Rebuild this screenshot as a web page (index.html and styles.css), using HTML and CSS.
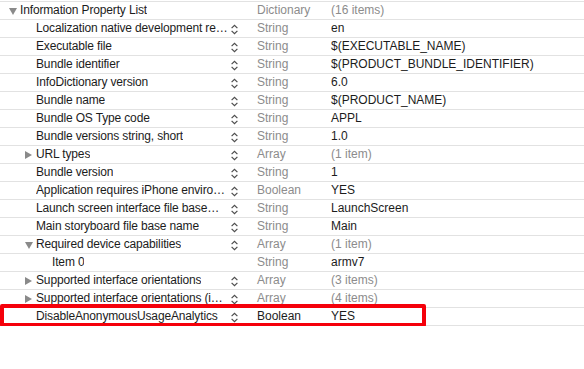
FILE: index.html
```html
<!DOCTYPE html>
<html lang="en">
<head>
    <meta charset="UTF-8">
    <title>Info.plist</title>
    <link rel="stylesheet" href="styles.css">
</head>
<body>
    <div class="plist">
        <div class="row">
            <div class="key"><span class="disc open"></span><span class="name">Information Property List</span></div>
            <div class="step"></div>
            <div class="type">Dictionary</div>
            <div class="value dim">(16 items)</div>
        </div>
        <div class="row">
            <div class="key lvl1"><span class="name">Localization native development re…</span></div>
            <div class="step"><svg viewBox="0 0 7 11" width="7" height="11"><polyline points="0.6,4.2 3.5,1.3 6.4,4.2"/><polyline points="0.6,6.8 3.5,9.7 6.4,6.8"/></svg></div>
            <div class="type">String</div>
            <div class="value">en</div>
        </div>
        <div class="row">
            <div class="key lvl1"><span class="name">Executable file</span></div>
            <div class="step"><svg viewBox="0 0 7 11" width="7" height="11"><polyline points="0.6,4.2 3.5,1.3 6.4,4.2"/><polyline points="0.6,6.8 3.5,9.7 6.4,6.8"/></svg></div>
            <div class="type">String</div>
            <div class="value">$(EXECUTABLE_NAME)</div>
        </div>
        <div class="row">
            <div class="key lvl1"><span class="name">Bundle identifier</span></div>
            <div class="step"><svg viewBox="0 0 7 11" width="7" height="11"><polyline points="0.6,4.2 3.5,1.3 6.4,4.2"/><polyline points="0.6,6.8 3.5,9.7 6.4,6.8"/></svg></div>
            <div class="type">String</div>
            <div class="value">$(PRODUCT_BUNDLE_IDENTIFIER)</div>
        </div>
        <div class="row">
            <div class="key lvl1"><span class="name">InfoDictionary version</span></div>
            <div class="step"><svg viewBox="0 0 7 11" width="7" height="11"><polyline points="0.6,4.2 3.5,1.3 6.4,4.2"/><polyline points="0.6,6.8 3.5,9.7 6.4,6.8"/></svg></div>
            <div class="type">String</div>
            <div class="value">6.0</div>
        </div>
        <div class="row">
            <div class="key lvl1"><span class="name">Bundle name</span></div>
            <div class="step"><svg viewBox="0 0 7 11" width="7" height="11"><polyline points="0.6,4.2 3.5,1.3 6.4,4.2"/><polyline points="0.6,6.8 3.5,9.7 6.4,6.8"/></svg></div>
            <div class="type">String</div>
            <div class="value">$(PRODUCT_NAME)</div>
        </div>
        <div class="row">
            <div class="key lvl1"><span class="name">Bundle OS Type code</span></div>
            <div class="step"><svg viewBox="0 0 7 11" width="7" height="11"><polyline points="0.6,4.2 3.5,1.3 6.4,4.2"/><polyline points="0.6,6.8 3.5,9.7 6.4,6.8"/></svg></div>
            <div class="type">String</div>
            <div class="value">APPL</div>
        </div>
        <div class="row">
            <div class="key lvl1"><span class="name">Bundle versions string, short</span></div>
            <div class="step"><svg viewBox="0 0 7 11" width="7" height="11"><polyline points="0.6,4.2 3.5,1.3 6.4,4.2"/><polyline points="0.6,6.8 3.5,9.7 6.4,6.8"/></svg></div>
            <div class="type">String</div>
            <div class="value">1.0</div>
        </div>
        <div class="row">
            <div class="key lvl1"><span class="disc"></span><span class="name">URL types</span></div>
            <div class="step"><svg viewBox="0 0 7 11" width="7" height="11"><polyline points="0.6,4.2 3.5,1.3 6.4,4.2"/><polyline points="0.6,6.8 3.5,9.7 6.4,6.8"/></svg></div>
            <div class="type">Array</div>
            <div class="value dim">(1 item)</div>
        </div>
        <div class="row">
            <div class="key lvl1"><span class="name">Bundle version</span></div>
            <div class="step"><svg viewBox="0 0 7 11" width="7" height="11"><polyline points="0.6,4.2 3.5,1.3 6.4,4.2"/><polyline points="0.6,6.8 3.5,9.7 6.4,6.8"/></svg></div>
            <div class="type">String</div>
            <div class="value">1</div>
        </div>
        <div class="row">
            <div class="key lvl1"><span class="name">Application requires iPhone enviro…</span></div>
            <div class="step"><svg viewBox="0 0 7 11" width="7" height="11"><polyline points="0.6,4.2 3.5,1.3 6.4,4.2"/><polyline points="0.6,6.8 3.5,9.7 6.4,6.8"/></svg></div>
            <div class="type">Boolean</div>
            <div class="value">YES</div>
        </div>
        <div class="row">
            <div class="key lvl1"><span class="name">Launch screen interface file base…</span></div>
            <div class="step"><svg viewBox="0 0 7 11" width="7" height="11"><polyline points="0.6,4.2 3.5,1.3 6.4,4.2"/><polyline points="0.6,6.8 3.5,9.7 6.4,6.8"/></svg></div>
            <div class="type">String</div>
            <div class="value">LaunchScreen</div>
        </div>
        <div class="row">
            <div class="key lvl1"><span class="name">Main storyboard file base name</span></div>
            <div class="step"><svg viewBox="0 0 7 11" width="7" height="11"><polyline points="0.6,4.2 3.5,1.3 6.4,4.2"/><polyline points="0.6,6.8 3.5,9.7 6.4,6.8"/></svg></div>
            <div class="type">String</div>
            <div class="value">Main</div>
        </div>
        <div class="row">
            <div class="key lvl1"><span class="disc open"></span><span class="name">Required device capabilities</span></div>
            <div class="step"><svg viewBox="0 0 7 11" width="7" height="11"><polyline points="0.6,4.2 3.5,1.3 6.4,4.2"/><polyline points="0.6,6.8 3.5,9.7 6.4,6.8"/></svg></div>
            <div class="type">Array</div>
            <div class="value dim">(1 item)</div>
        </div>
        <div class="row">
            <div class="key lvl2"><span class="name">Item 0</span></div>
            <div class="step"></div>
            <div class="type">String</div>
            <div class="value">armv7</div>
        </div>
        <div class="row">
            <div class="key lvl1"><span class="disc"></span><span class="name">Supported interface orientations</span></div>
            <div class="step"><svg viewBox="0 0 7 11" width="7" height="11"><polyline points="0.6,4.2 3.5,1.3 6.4,4.2"/><polyline points="0.6,6.8 3.5,9.7 6.4,6.8"/></svg></div>
            <div class="type">Array</div>
            <div class="value dim">(3 items)</div>
        </div>
        <div class="row">
            <div class="key lvl1"><span class="disc"></span><span class="name">Supported interface orientations (i…</span></div>
            <div class="step"><svg viewBox="0 0 7 11" width="7" height="11"><polyline points="0.6,4.2 3.5,1.3 6.4,4.2"/><polyline points="0.6,6.8 3.5,9.7 6.4,6.8"/></svg></div>
            <div class="type">Array</div>
            <div class="value dim">(4 items)</div>
        </div>
        <div class="row">
            <div class="key lvl1"><span class="name">DisableAnonymousUsageAnalytics</span></div>
            <div class="step"><svg viewBox="0 0 7 11" width="7" height="11"><polyline points="0.6,4.2 3.5,1.3 6.4,4.2"/><polyline points="0.6,6.8 3.5,9.7 6.4,6.8"/></svg></div>
            <div class="type new">Boolean</div>
            <div class="value">YES</div>
            <span class="highlight"></span>
        </div>
    </div>
</body>
</html>
```

FILE: styles.css
```css
body {
    margin: 0;
    padding-top: 1px;
    background: #fff;
    font-family: "Liberation Sans", Arial, sans-serif;
    font-size: 12px;
    color: #1c1c1c;
}

.plist {
    border-top: 1px solid #e2e2e2;
}

.row {
    display: grid;
    grid-template-columns: 229px 19px 83px 1fr;
    height: 17px;
    line-height: 17px;
    border-bottom: 1px solid #e2e2e2;
    position: relative;
}

.key {
    display: flex;
    align-items: center;
    padding-left: 20px;
    overflow: hidden;
}

.key.lvl1 {
    padding-left: 36px;
}

.key.lvl2 {
    padding-left: 52px;
}

.name {
    white-space: nowrap;
    overflow: hidden;
    text-overflow: ellipsis;
    letter-spacing: -0.15px;
}

/* disclosure triangles */
.disc {
    flex: none;
    width: 0;
    height: 0;
    margin-left: -11px;
    margin-right: 4px;
    border-top: 4px solid transparent;
    border-bottom: 4px solid transparent;
    border-left: 7px solid #8a8a8a;
}

.disc.open {
    margin-right: 3px;
    border-left: 4px solid transparent;
    border-right: 4px solid transparent;
    border-top: 7px solid #8a8a8a;
    border-bottom: 0;
    margin-top: 1px;
}

.step {
    display: flex;
    align-items: center;
    padding-left: 2px;
    padding-top: 2px;
}

.step svg {
    fill: none;
    stroke: #4d4d4d;
    stroke-width: 1.2;
}

.type {
    padding-left: 9px;
    color: #8c8c8c;
}

.type.new {
    color: #1c1c1c;
}

.value {
    white-space: nowrap;
}

.value.dim {
    color: #8c8c8c;
}

.highlight {
    position: absolute;
    left: 0;
    top: -4px;
    width: 418px;
    height: 15px;
    border: 4px solid #f5000a;
    border-radius: 2px;
}
```
